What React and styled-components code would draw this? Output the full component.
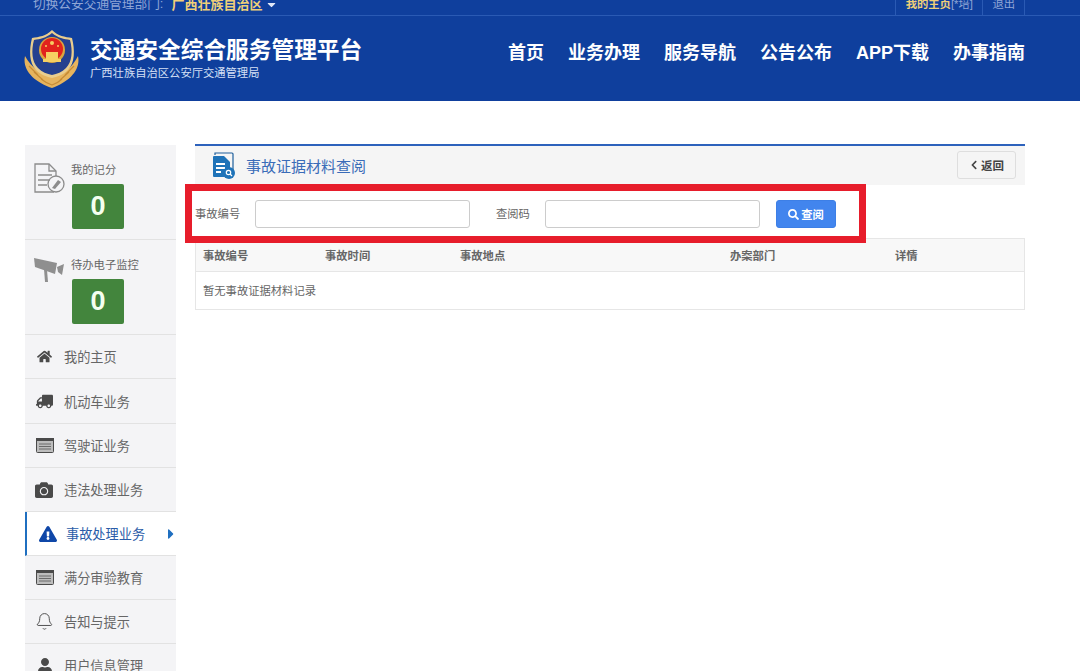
import React from 'react'
import styled, { createGlobalStyle } from 'styled-components'
import { Bell } from 'lucide-react'
import {
  FaHome,
  FaTruck,
  FaCamera,
  FaExclamationTriangle,
  FaUser,
  FaSearch,
  FaChevronLeft,
  FaCaretRight,
  FaCaretDown,
} from 'react-icons/fa'

const GlobalStyle = createGlobalStyle`
  html, body {
    margin: 0;
    padding: 0;
    background: #fff;
    overflow: hidden;
  }
  body {
    font-family: "Liberation Sans", "Noto Sans CJK SC", sans-serif;
    font-size: 12px;
    color: #555;
  }
  * { box-sizing: border-box; }
`

const Page = styled.div`
  position: relative;
  width: 1080px;
  height: 671px;
  overflow: hidden;
`

const Header = styled.header`
  height: 101px;
  background: #0f3f9d;
`

const TopStrip = styled.div`
  height: 16px;
  padding: 0 55px 0 33px;
  display: flex;
  justify-content: space-between;
  border-bottom: 1px solid #2a5ab4;
  overflow: hidden;
`

const Region = styled.div`
  display: flex;
  align-items: center;
  height: 9px;
  line-height: 9px;
  color: #8fa6d6;
  font-size: 12.7px;
  svg { color: #dfe7f7; margin-left: 3px; font-size: 13px; }
`

const Gold = styled.b`
  color: #f0cf78;
  font-size: 13px;
  font-weight: 700;
  margin-left: 8px;
`

const TopLinks = styled.div`
  display: flex;
  height: 15px;
`

const TopLink = styled.div`
  line-height: 9px;
  height: 15px;
  font-size: 11.3px;
  color: #8fa6d6;
  padding: 0 ${(p) => p.$pad}px;
  border-left: 1px solid #2a5ab4;
  border-right: ${(p) => (p.$last ? '1px solid #2a5ab4' : 'none')};
`

const TopGold = styled.b`
  color: #f0cf78;
  font-weight: 700;
`

const Brand = styled.div`
  height: 85px;
  padding: 14px 55px 0 24px;
  display: flex;
  align-items: flex-start;
`

const Emblem = styled.svg`
  width: 55px;
  height: 58px;
  flex: none;
`

const BrandText = styled.div`
  margin: 5px 0 0 11px;
  color: #fff;
`

const BrandTitle = styled.div`
  font-size: 22.7px;
  line-height: 30px;
  font-weight: 700;
`

const BrandSub = styled.div`
  font-size: 11.3px;
  line-height: 16px;
  color: #d5e0f5;
`

const Nav = styled.nav`
  margin: 9px 0 0 auto;
  display: flex;
  gap: 24px;
`

const NavLink = styled.a`
  color: #fff;
  font-size: 18px;
  line-height: 28px;
  font-weight: 700;
`

const Body = styled.div`
  padding: 43px 55px 0 25px;
  display: flex;
  align-items: flex-start;
  gap: 19px;
`

const Sidebar = styled.aside`
  width: 151px;
  flex: none;
  margin-top: 1px;
  background: #f4f4f6;
`

const Stat = styled.div`
  height: 95px;
  border-bottom: 1px solid #e2e2e2;
  padding: 17px 0 0 9px;
  display: grid;
  grid-template-columns: 38px 52px;
  grid-template-rows: 22px 45px;
`

const StatIcon = styled.svg`
  width: 31px;
  height: 34px;
  grid-row: 1 / 3;
`

const StatLabel = styled.div`
  font-size: 11.3px;
  line-height: 15px;
  color: #666;
  white-space: nowrap;
  margin: 1px 0 0 -1px;
`

const StatValue = styled.div`
  background: #43853d;
  border-radius: 2px;
  color: #f4fff0;
  font-size: 27px;
  font-weight: 700;
  line-height: 45px;
  text-align: center;
`

const MenuItem = styled.div`
  height: ${(p) => (p.$tall ? '45px' : '44px')};
  display: flex;
  align-items: center;
  padding-left: ${(p) => (p.$active ? '12px' : '10px')};
  border-bottom: 1px solid #e2e2e2;
  border-left: ${(p) => (p.$active ? '2px solid #1f6fc0' : 'none')};
  background: ${(p) => (p.$active ? '#fff' : 'transparent')};
  color: ${(p) => (p.$active ? '#2a5ca8' : '#666')};
  font-size: 13.2px;
  position: relative;
`

const MenuIcon = styled.span`
  width: ${(p) => (p.$active ? '27px' : '29px')};
  flex: none;
  display: flex;
  align-items: center;
  padding-left: ${(p) => p.$pad}px;
  font-size: ${(p) => p.$size}px;
  color: ${(p) => (p.$active ? '#0f47a8' : '#4a4a4a')};
`

const FlippedTruck = styled(FaTruck)`
  transform: scaleX(-1);
`

const MenuArrow = styled(FaCaretRight)`
  position: absolute;
  right: -3px;
  top: 14px;
  color: #1f6fc0;
  font-size: 16px;
`

const Main = styled.main`
  flex: 1;
  min-width: 0;
`

const TitleBar = styled.div`
  height: 41px;
  border-top: 2px solid #2d62bc;
  background: #f5f5f5;
  display: flex;
  align-items: center;
  padding: 0 9px 0 17px;
`

const TitleIcon = styled.svg`
  width: 24px;
  height: 28px;
`

const Title = styled.h2`
  margin: 0 0 0 10px;
  font-size: 15px;
  font-weight: 400;
  color: #3a6cb8;
`

const BackButton = styled.button`
  margin: -2px 0 0 auto;
  width: 59px;
  height: 28px;
  background: #f5f5f5;
  border: 1px solid #dedede;
  border-radius: 3px;
  color: #444;
  font: 700 11.5px "Liberation Sans", "Noto Sans CJK SC", sans-serif;
  display: flex;
  align-items: center;
  justify-content: center;
  gap: 2px;
  padding: 0;
  svg { font-size: 10px; }
`

const SearchForm = styled.div`
  height: 53px;
  padding-top: 15px;
  display: flex;
  align-items: flex-start;
`

const FieldLabel = styled.label`
  width: ${(p) => p.$w}px;
  line-height: 28px;
  font-size: 11.3px;
  color: #666;
  margin-left: ${(p) => p.$ml || 0}px;
`

const Input = styled.input`
  width: 215px;
  height: 28px;
  background: #fff;
  border: 1px solid #ccc;
  border-radius: 3px;
`

const SearchButton = styled.button`
  margin-left: 16px;
  width: 60px;
  height: 28px;
  background: #4285ee;
  border: 1px solid #3d7fe6;
  border-radius: 3px;
  color: #fff;
  font: 700 11.3px "Liberation Sans", "Noto Sans CJK SC", sans-serif;
  display: flex;
  align-items: center;
  justify-content: center;
  gap: 2px;
  padding: 0;
  svg { font-size: 11px; }
`

const Table = styled.div`
  border: 1px solid #e6e6e6;
  height: 72px;
`

const TableHead = styled.div`
  height: 33px;
  background: #f8f8f8;
  border-bottom: 1px solid #e6e6e6;
  display: grid;
  grid-template-columns: 122px 135px 270px 165px 1fr;
  align-items: center;
  padding-left: 7px;
`

const HeadCell = styled.div`
  font-size: 11.3px;
  font-weight: 700;
  color: #666;
`

const EmptyRow = styled.div`
  height: 38px;
  line-height: 39px;
  padding-left: 7px;
  font-size: 11.3px;
  color: #666;
`

const Highlight = styled.div`
  position: absolute;
  left: 185px;
  top: 184px;
  width: 681px;
  height: 59px;
  border: 7px solid #e71d2b;
  pointer-events: none;
`

function ListCard() {
  return (
    <svg width="18" height="15" viewBox="0 0 18 15">
      <rect x="0.5" y="0.5" width="17" height="14" rx="1" fill="#bdbdbd" stroke="#4a4a4a" />
      <rect x="0" y="0" width="18" height="3" fill="#4a4a4a" />
      <path d="M3 6 H15 M3 8.5 H15 M3 11 H15" stroke="#6a6a6a" />
    </svg>
  )
}

const menu = [
  { icon: <FaHome />, label: '我的主页', size: 15, pad: 2 },
  { icon: <FlippedTruck />, label: '机动车业务', size: 17, pad: 1 },
  { icon: <ListCard />, label: '驾驶证业务', size: 18, pad: 1 },
  { icon: <FaCamera />, label: '违法处理业务', size: 18, pad: 0 },
  { icon: <FaExclamationTriangle />, label: '事故处理业务', size: 18, pad: 0, active: true },
  { icon: <ListCard />, label: '满分审验教育', size: 18, pad: 1 },
  { icon: <Bell size={19} strokeWidth={1.2} />, label: '告知与提示', size: 19, pad: 0 },
  { icon: <FaUser />, label: '用户信息管理', size: 16, pad: 2 },
]

const navItems = ['首页', '业务办理', '服务导航', '公告公布', 'APP下载', '办事指南']
const columns = ['事故编号', '事故时间', '事故地点', '办案部门', '详情']

function PoliceEmblem() {
  return (
    <Emblem viewBox="0 0 55 58">
      {/* wheat wreath */}
      <path d="M1 26 C-2 40 10 52 28 58 C45 52 57 40 54 26 C51 32 47 37 42 41 L14 41 C9 37 4 32 1 26 Z" fill="#e6b45e" />
      <path d="M5 36 L14 45 M10 42 L19 50 M50 36 L41 45 M45 42 L36 50 M17 49 C22 53 25 54 28 55 C31 54 34 53 38 49" fill="none" stroke="#c78c36" strokeWidth="1.2" />
      {/* shield */}
      <path d="M28 0 C34 6 41 7 48 8 C51 20 51 33 44 40 C39 45 33 47 28 48 C23 47 17 45 12 40 C5 33 5 20 8 8 C15 7 22 6 28 0 Z" fill="#e9cd8e" />
      <path d="M28 3 C34 8 40 9 46 10 C49 21 48 32 42 38 C38 42 33 44 28 45 C23 44 18 42 14 38 C8 32 7 21 10 10 C16 9 22 8 28 3 Z" fill="#25408f" />
      {/* national emblem */}
      <circle cx="28" cy="20" r="13" fill="#dca63e" />
      <circle cx="28" cy="19" r="11" fill="#e2231d" />
      <path d="M19 29 h18 v3 h-18 Z M22 22 h12 v7 h-12 Z" fill="#f6cf62" />
      <circle cx="28" cy="13" r="2" fill="#f6cf62" />
      <circle cx="22" cy="16" r="1" fill="#f6cf62" />
      <circle cx="34" cy="16" r="1" fill="#f6cf62" />
    </Emblem>
  )
}

function ScoreIcon() {
  return (
    <StatIcon viewBox="0 0 31 34" fill="none" stroke="#8c8c8c" strokeWidth="1.3">
      <path d="M20 30 H1 V2 H15 L22 9 V14" />
      <path d="M15 2 V9 H22" />
      <path d="M4 13 H18 M4 18 H16 M4 23 H13" />
      <circle cx="22" cy="22" r="8" />
      <path d="M18 26 L24 18 L27 20 L21 27 Z" fill="#8c8c8c" stroke="none" />
    </StatIcon>
  )
}

function CameraIcon() {
  return (
    <StatIcon viewBox="0 0 31 34" fill="#8f8f8f">
      <path d="M0 1 L23 6 L21 17 L1 10 Z" />
      <path d="M10 12 L13 13 L14 25 L11 25 Z" />
      <path d="M23 10 L30 7 L28 18 L24 15 Z" />
    </StatIcon>
  )
}

function DocSearchIcon() {
  return (
    <TitleIcon viewBox="0 0 24 28">
      <path d="M3 3 V1 H20 Q21 1 21 2 V18" fill="none" stroke="#1f5f9c" strokeWidth="1.2" />
      <path d="M2 4 H12 L18 10 V25 H2 Q1 25 1 24 V5 Q1 4 2 4 Z" fill="#1f73b8" />
      <path d="M4 12 H13 M4 16 H13 M4 20 H9" stroke="#fff" strokeWidth="1.8" />
      <circle cx="17" cy="21" r="6" fill="#1f73b8" />
      <circle cx="16.5" cy="20.5" r="2.2" fill="none" stroke="#fff" strokeWidth="1.2" />
      <path d="M18 22 L20 24" stroke="#fff" strokeWidth="1.2" />
    </TitleIcon>
  )
}

export default function App() {
  return (
    <Page>
      <GlobalStyle />
      <Header>
        <TopStrip>
          <Region>
            切换公安交通管理部门:<Gold>广西壮族自治区</Gold>
            <FaCaretDown />
          </Region>
          <TopLinks>
            <TopLink $pad={9.5}>
              <TopGold>我的主页</TopGold>[*培]
            </TopLink>
            <TopLink $pad={9} $last>
              退出
            </TopLink>
          </TopLinks>
        </TopStrip>
        <Brand>
          <PoliceEmblem />
          <BrandText>
            <BrandTitle>交通安全综合服务管理平台</BrandTitle>
            <BrandSub>广西壮族自治区公安厅交通管理局</BrandSub>
          </BrandText>
          <Nav>
            {navItems.map((n) => (
              <NavLink key={n}>{n}</NavLink>
            ))}
          </Nav>
        </Brand>
      </Header>
      <Body>
        <Sidebar>
          <Stat>
            <ScoreIcon />
            <StatLabel>我的记分</StatLabel>
            <StatValue>0</StatValue>
          </Stat>
          <Stat>
            <CameraIcon />
            <StatLabel>待办电子监控</StatLabel>
            <StatValue>0</StatValue>
          </Stat>
          {menu.map((m, i) => (
            <MenuItem key={m.label} $active={m.active} $tall={i === 1}>
              <MenuIcon $active={m.active} $size={m.size} $pad={m.pad}>
                {m.icon}
              </MenuIcon>
              {m.label}
              {m.active && <MenuArrow />}
            </MenuItem>
          ))}
        </Sidebar>
        <Main>
          <TitleBar>
            <DocSearchIcon />
            <Title>事故证据材料查阅</Title>
            <BackButton>
              <FaChevronLeft />
              返回
            </BackButton>
          </TitleBar>
          <SearchForm>
            <FieldLabel $w={60}>事故编号</FieldLabel>
            <Input />
            <FieldLabel $w={49} $ml={26}>
              查阅码
            </FieldLabel>
            <Input />
            <SearchButton>
              <FaSearch />
              查阅
            </SearchButton>
          </SearchForm>
          <Table>
            <TableHead>
              {columns.map((c) => (
                <HeadCell key={c}>{c}</HeadCell>
              ))}
            </TableHead>
            <EmptyRow>暂无事故证据材料记录</EmptyRow>
          </Table>
        </Main>
      </Body>
      <Highlight />
    </Page>
  )
}
